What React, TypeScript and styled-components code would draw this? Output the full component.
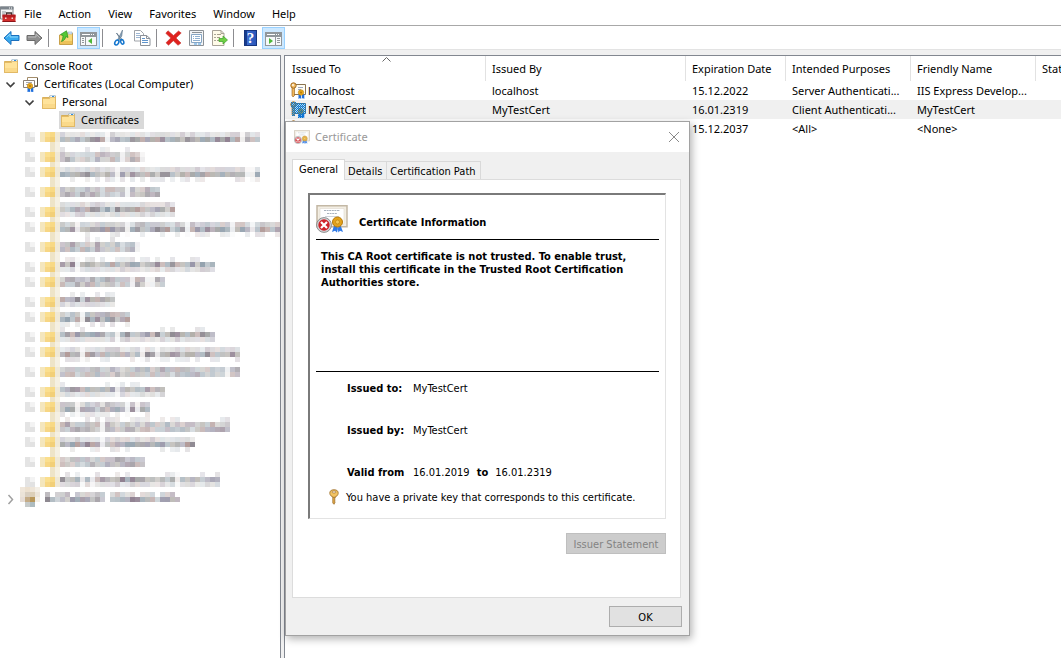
import React from "react";
import styled, { createGlobalStyle } from "styled-components";

const UI_FONT = '"Noto Sans", "Open Sans", sans-serif';
const DIALOG_FONT = '"DejaVu Sans Condensed", "Liberation Sans", sans-serif';

const GlobalStyle = createGlobalStyle`
  *, *::before, *::after { box-sizing: border-box; }
  body { margin: 0; background: #f0f0f0; color: #000; font: 11px/18px ${UI_FONT}; overflow: hidden; }
  button { font: inherit; color: inherit; border: 0; background: none; padding: 0; margin: 0; }
  svg { display: block; flex: none; }
`;

/* ---------- window frame ---------- */

const Window = styled.div`
  display: flex;
  flex-direction: column;
  min-height: 100vh;
`;

const MenuBar = styled.nav`
  display: flex;
  align-items: center;
  height: 26px;
  background: #fff;
  border-bottom: 1px solid #a8a8a8;
`;

const MenuItem = styled.button`
  height: 25px;
  padding: 2px 9px 0 8px;
  line-height: 22px;
`;

const MenuIcon = styled.span`
  width: 16px;
  padding-top: 2px;
`;

const ToolBar = styled.div`
  display: flex;
  align-items: center;
  height: 24px;
  padding-top: 1px;
  background: #fff;
  border-bottom: 1px solid #e3e3e3;
`;

const ToolButton = styled.button<{ $pressed?: boolean }>`
  display: flex;
  align-items: center;
  justify-content: center;
  width: 23px;
  height: 22px;
  background: ${(p) => (p.$pressed ? "#cce8ff" : "transparent")};
  border: 1px solid ${(p) => (p.$pressed ? "#99d1ff" : "transparent")};
`;

const ToolSeparator = styled.span`
  width: 1px;
  height: 18px;
  margin: 0 5px 0 2px;
  background: #8c8c90;
`;

const Workspace = styled.main`
  display: grid;
  grid-template-columns: 281px 1fr;
  column-gap: 3px;
  flex: 1;
  padding-top: 5px;
`;

const Pane = styled.section`
  min-width: 0;
  background: #fff;
  border-top: 1px solid #828790;
  overflow: hidden;
`;

const TreePane = styled(Pane)`
  border-right: 1px solid #828790;
`;

const ListPane = styled(Pane)`
  border-left: 1px solid #828790;
`;

/* ---------- tree ---------- */

const Tree = styled.ul`
  list-style: none;
  margin: 0;
  padding: 1px 0 0;
`;

const TreeRow = styled.li<{ $level: number }>`
  display: flex;
  align-items: center;
  height: 18px;
  padding-left: ${(p) => p.$level * 19 - 17}px;
`;

const Expander = styled.span`
  display: flex;
  align-items: center;
  width: 19px;
  height: 18px;
  padding-left: 3px;
`;

const TreeNode = styled.span<{ $selected?: boolean }>`
  display: flex;
  align-items: center;
  gap: 6px;
  height: 18px;
  padding: 0 5px 0 2px;
  background: ${(p) => (p.$selected ? "#d9d9d9" : "transparent")};
`;

const Redacted = styled.div`
  padding-top: 3px;
`;

/* ---------- list ---------- */

const CertTable = styled.table`
  width: 100%;
  min-width: 830px;
  table-layout: fixed;
  border-collapse: separate;
  border-spacing: 0;
`;

const HeadCell = styled.th`
  position: relative;
  height: 25px;
  padding: 0 6px;
  font-weight: 400;
  text-align: left;
  white-space: nowrap;
  overflow: hidden;
  border-right: 1px solid #e2e2e2;

  &:first-child { padding-left: 7px; }
`;

const SortArrow = styled.span`
  position: absolute;
  top: 1px;
  left: 97px;
`;

const BodyRow = styled.tr<{ $selected?: boolean }>`
  height: 19px;
  background: ${(p) => (p.$selected ? "#f0f0f0" : "#fff")};
`;

const Cell = styled.td`
  padding: 0 6px;
  white-space: nowrap;
  overflow: hidden;
`;

const NameCell = styled(Cell)`
  padding: 0 0 0 5px;
`;

const NameContent = styled.div`
  display: flex;
  align-items: center;
  gap: 2px;
`;

/* ---------- dialog ---------- */

const Dialog = styled.div`
  position: absolute;
  left: 285px;
  top: 121px;
  width: 405px;
  display: flex;
  flex-direction: column;
  background: #f0f0f0;
  border: 1px solid #a2a2a2;
  box-shadow: 2px 3px 8px rgba(0, 0, 0, 0.3);
  font: 11px/13px ${DIALOG_FONT};
`;

const TitleBar = styled.header`
  display: flex;
  align-items: center;
  gap: 5px;
  height: 30px;
  padding: 0 9px 0 8px;
  background: #fff;
  color: #999;
  font: 11px/18px ${UI_FONT};
`;

const Title = styled.h1`
  flex: 1;
  margin: 0;
  font-size: 11px;
  font-weight: 400;
`;

const Tabs = styled.div`
  display: flex;
  align-items: flex-end;
  height: 27px;
  padding: 0 6px;
`;

const Tab = styled.button<{ $active?: boolean }>`
  position: relative;
  height: ${(p) => (p.$active ? 21 : 18)}px;
  margin-bottom: ${(p) => (p.$active ? -1 : 0)}px;
  padding: ${(p) => (p.$active ? "0 6px 2px 6px" : "1px 4px 0 3px")};
  background: ${(p) => (p.$active ? "#fff" : "#f0f0f0")};
  border: 1px solid #d9d9d9;
  border-bottom: 0;
  border-left-width: ${(p) => (p.$active ? 1 : 0)}px;
  z-index: ${(p) => (p.$active ? 1 : 0)};
`;

const TabPanel = styled.div`
  display: flex;
  flex-direction: column;
  align-items: stretch;
  height: 419px;
  margin: 0 8px 0 6px;
  padding: 13px 14px 0 15px;
  background: #fff;
  border: 1px solid #dcdcdc;
`;

const InfoBox = styled.section`
  height: 326px;
  padding: 10px 6px 0;
  border: 1px solid #e3e3e3;
  border-top: 2px solid #7a7a7a;
  border-left: 2px solid #7a7a7a;
`;

const InfoHeader = styled.div`
  display: flex;
  align-items: flex-start;
  gap: 11px;
  height: 35px;
  border-bottom: 1px solid #000;
`;

const InfoTitle = styled.h2`
  margin: 0;
  padding-top: 11px;
  font-size: 11px;
  font-weight: 700;
`;

const Warning = styled.p`
  height: 132px;
  margin: 0;
  padding: 10px 5px 0;
  font-weight: 700;
  border-bottom: 1px solid #000;
`;

const Facts = styled.dl`
  display: grid;
  grid-template-columns: 66px 1fr;
  grid-auto-rows: 42px;
  margin: 0;
  padding: 10px 0 0 31px;

  dt { font-weight: 700; }
  dd { margin: 0; display: flex; gap: 7px; }
`;

const KeyNote = styled.p`
  display: flex;
  align-items: center;
  gap: 7px;
  margin: -19px 0 0;
  padding-left: 13px;
`;

const PushButton = styled.button<{ $width: number }>`
  width: ${(p) => p.$width}px;
  height: 21px;
  padding-top: 1px;
  background: #e1e1e1;
  border: 1px solid #adadad;

  &:disabled {
    color: #838383;
    background: #ccc;
    border-color: #bfbfbf;
  }
`;

const StatementRow = styled.div`
  display: flex;
  justify-content: flex-end;
  padding-top: 14px;
`;

const DialogFooter = styled.footer`
  display: flex;
  justify-content: flex-end;
  padding: 8px 7px;
`;

/* ---------- icons ---------- */

const FolderIcon = () => (
  <svg width="14" height="16" viewBox="0 0 14 16" aria-hidden="true">
    <path d="M.5 3.500H7l1-1.500h5.500v12.500H.5z" fill="#e9bd5c" stroke="#d3a648" strokeWidth=".8" />
    <rect x="8" y="1.500" width="5" height="3" fill="#f6faff" stroke="#a9c4dc" strokeWidth=".7" />
    <rect x="10" y="2" width="2" height="1" fill="#2f8be0" />
    <path d="M.5 4.500h7l1-1h5v11H.5z" fill="#ffe39a" stroke="#dcb25c" strokeWidth=".7" />
    <path d="M1 10h12v4H1z" fill="#fad98a" />
  </svg>
);

const Ribbon = ({ x, y }: { x: number; y: number }) => (
  <g transform={`translate(${x} ${y})`}>
    <path d="M-2.500 1.500v5l1.500-1 1 1V2z M.8 2v4.500l1-1 1.500 1V1.500z" fill="#1f6fdd" />
    <circle r="2.700" fill="#e8a91c" stroke="#c08312" strokeWidth=".6" />
    <circle r="1" fill="#b87a08" />
  </g>
);

const CertStoreIcon = () => (
  <svg width="15" height="16" viewBox="0 0 15 16" aria-hidden="true">
    <path d="M4.500 1.500h10v8h-10z" fill="#fff" stroke="#a38d6b" />
    <path d="M14.500 2v8.500h-3" fill="none" stroke="#5b5348" />
    <path d="M.5 4.500h11v7H.5z" fill="#fff" stroke="#8a8078" />
    <path d="M3 6.500h6M3 8.500h3" stroke="#a8a8b0" />
    <Ribbon x={7} y={10} />
  </svg>
);

const CertIcon = ({ selected }: { selected?: boolean }) => (
  <svg width="16" height="17" viewBox="0 0 16 17" aria-hidden="true">
    <path d="M3.500 2.500h12v10h-12z" fill="#fffdf4" stroke="#8a7350" />
    <path d="M8 5.500h5M8 7.500h3" stroke="#9aa6c0" />
    <path d="M2 5h2.500v8.500L3 15 2 13.500z" fill="#f0b65a" stroke="#8f5d1c" strokeWidth=".6" />
    <circle cx="3.500" cy="3.500" r="2.700" fill="#f3bd66" stroke="#a06a22" />
    <circle cx="3" cy="3" r=".9" fill="#fff" />
    <Ribbon x={11} y={10.5} />
    {selected && (
      <>
        <defs>
          <pattern id="selectionDither" width="2" height="2" patternUnits="userSpaceOnUse">
            <path d="M0 0h1v1H0zM1 1h1v1H1z" fill="#0078d7" />
          </pattern>
        </defs>
        <path d="M1 1h5v1h10v11h-2v4H8v-4H5v2H2V6H1z" fill="#0078d7" opacity=".25" />
        <path d="M1 1h5v1h10v11h-2v4H8v-4H5v2H2V6H1z" fill="url(#selectionDither)" shapeRendering="crispEdges" />
      </>
    )}
  </svg>
);

const BadCertIcon = ({ size }: { size: number }) => (
  <svg width={size} height={(size * 7) / 8} viewBox="0 0 32 28" opacity={size < 20 ? 0.8 : 1} aria-hidden="true">
    <path d="M1 .8h30v21H1z" fill="#f3eee3" stroke="#c3b8a5" strokeWidth="1.500" />
    <path d="M4 3.500h24v15.500H4z" fill="#fff" stroke="#ddd8ce" strokeWidth=".6" />
    <path d="M8 5.500h16M11 8.500h10" stroke="#a9b2bd" strokeDasharray="2 .6" />
    <path d="M9 11.500h14" stroke="#cfd4da" />
    <path d="M18.500 19l-2.500 8 3-1.200 2 1.800 1.500-6zM24 19l3 8-3-1.200-1.600 1.800L21.500 21z" fill="#2e79e6" />
    <circle cx="21.500" cy="17" r="5" fill="#e3a21b" stroke="#b87a08" />
    <circle cx="21.500" cy="17" r="2" fill="#f5c851" stroke="#b57a0a" strokeWidth=".6" />
    <circle cx="8" cy="20" r="7.400" fill="#d5d7da" stroke="#777" strokeWidth=".8" />
    <circle cx="8" cy="20" r="5.700" fill="#cf2228" />
    <path d="M5 17l6 6M11 17l-6 6" stroke="#fff" strokeWidth="2.200" />
  </svg>
);

const ConsoleIcon = () => (
  <svg width="16" height="18" viewBox="0 0 16 18" aria-hidden="true">
    <path d="M.5 2h12.500v12H.5z" fill="#f4f5f6" stroke="#868b91" />
    <path d="M0 1.500h13.500v3H0z" fill="#7c848c" />
    <path d="M9 3h1M11 3h1" stroke="#fff" />
    <path d="M2 7h4M2 9h3" stroke="#8f959b" />
    <path d="M6.500 10V8h5v2" fill="none" stroke="#3d3030" strokeWidth="1.300" />
    <path d="M2.500 10h13v7h-13z" fill="#d32f2d" />
    <path d="M2.500 9.500h13v3h-13z" fill="#b31c20" />
    <path d="M5 12.500h1.500V14H5zM11.500 12.500H13V14h-1.500z" fill="#f5d9d6" />
    <path d="M2.500 16h13v1h-13z" fill="#8c1519" />
  </svg>
);

const ArrowIcon = ({ forward }: { forward?: boolean }) => (
  <svg width="17" height="16" viewBox="0 0 17 16" aria-hidden="true">
    <path
      d={forward ? "M16 8L9 1.500v4H1v5h8v4z" : "M1 8l7-6.500v4h8v5H8v4z"}
      fill={forward ? "#8f8f8f" : "#38a9ee"}
      stroke={forward ? "#6a6a6a" : "#1b6fbd"}
      strokeLinejoin="round"
    />
    <path d={forward ? "M2 7h8V4l4 4" : "M15 7H7V4L3.500 7.500"} fill="none" stroke={forward ? "#bdbdbd" : "#8bd6fb"} />
  </svg>
);

const FolderUpIcon = () => (
  <svg width="16" height="16" viewBox="0 0 16 16" aria-hidden="true">
    <path d="M1.500 5h5l1.500-2h6.500v11.500h-13z" fill="#f8d878" stroke="#c9a14a" />
    <path d="M10 2h4v2h-4z" fill="#dceaf8" stroke="#8fb0d0" strokeWidth=".6" />
    <path d="M2 11h12v3H2z" fill="#edc25a" />
    <path d="M3.500 11.500C6.500 10.500 7.500 8.500 7.700 6.500L10 7.500 8.500.8 2.500 4.500l2.500 1c0 2-.5 3.500-1.500 6z" fill="#55c936" stroke="#259020" strokeWidth=".7" />
  </svg>
);

const PaneIcon = ({ mirrored }: { mirrored?: boolean }) => (
  <svg width="17" height="16" viewBox="0 -2 17 16" shapeRendering="crispEdges" aria-hidden="true">
    <path d="M.5.500h16v13H.5z" fill="#f7f9fa" stroke="#92979b" />
    <path d="M1 1h15v3H1z" fill="#8f969b" />
    <path d="M2 2h8v1H2zM11 2h1v1h-1zM13 2h1v1h-1z" fill="#fff" />
    {mirrored ? (
      <>
        <path d="M10.500 5v8M1 4.500h15" stroke="#92979b" />
        <path d="M12 6h3v1h-3zM12 8h3v1h-3zM12 10h3v1h-3z" fill="#92979b" />
        <path d="M4 6l4 3-4 3z" fill="#4cb838" shapeRendering="auto" />
      </>
    ) : (
      <>
        <path d="M5.500 5v8M1 4.500h15" stroke="#92979b" />
        <path d="M2 6h2v1H2zM2 8h2v1H2zM2 10h2v1H2z" fill="#92979b" />
        <path d="M12 6l-4 3 4 3z" fill="#4cb838" shapeRendering="auto" />
      </>
    )}
  </svg>
);

const CutIcon = () => (
  <svg width="15" height="16" viewBox="0 0 15 16" aria-hidden="true">
    <path d="M10.500 0L9.800 6 6.500 11 5.500 10z" fill="#8ba5bc" stroke="#4d6478" strokeWidth=".5" />
    <path d="M4.500 3l5 8 1-1z" fill="#dbe7f0" stroke="#4d6478" strokeWidth=".7" />
    <ellipse cx="4.800" cy="12.500" rx="1.800" ry="2.600" fill="none" stroke="#1677cf" strokeWidth="1.600" transform="rotate(30 4.800 12.500)" />
    <ellipse cx="10.200" cy="11.800" rx="1.500" ry="2.400" fill="none" stroke="#1677cf" strokeWidth="1.500" transform="rotate(-20 10.200 11.800)" />
  </svg>
);

const CopyIcon = () => (
  <svg width="17" height="16" viewBox="0 0 17 16" aria-hidden="true">
    <path d="M.5.5h6l3 3V11H.5z" fill="#fff" stroke="#9fa3a9" />
    <path d="M2 3.500h4M2 5.500h5M2 7.500h5" stroke="#9db6d3" />
    <path d="M6.500 5.500h6l3.500 3V15.500H6.500z" fill="#fff" stroke="#8c9198" />
    <path d="M12.500 5.500v3H16" fill="none" stroke="#8c9198" />
    <path d="M8 8.500h3M8 10.500h6M8 12.500h6" stroke="#5f94cc" />
  </svg>
);

const DeleteIcon = () => (
  <svg width="17" height="16" viewBox="0 0 17 16" aria-hidden="true">
    <path d="M3 .8L8.500 5.500 13.500 1l2.700 2L11 8l5 5-3 2.300L8.300 10.700 3.500 15.200 1 12.800 5.800 8 .8 3.300z" fill="#e0221f" stroke="#c43a36" strokeWidth=".6" />
  </svg>
);

const PropertiesIcon = () => (
  <svg width="16" height="16" viewBox="0 0 16 16" aria-hidden="true">
    <path d="M.5.500h14v15H.5z" fill="#f2f4f6" stroke="#8c9196" />
    <path d="M3 2.500h10" stroke="#8a9096" />
    <path d="M2.500 4.500h10v8h-10z" fill="#fff" stroke="#87a6c4" />
    <path d="M4 6.500h1M4 8.500h1M6 6.500h5M6 8.500h5M4 10.500h7" stroke="#8fb0d0" />
    <path d="M5 14h3M9 14h3" stroke="#4a9be0" />
  </svg>
);

const ExportIcon = () => (
  <svg width="16" height="16" viewBox="0 0 16 16" aria-hidden="true">
    <path d="M.5.500h8.500l3 3V15.500H.5z" fill="#fffbe8" stroke="#a8a297" />
    <path d="M9 .500v3h3" fill="none" stroke="#a8a297" />
    <path d="M2.500 4.500h1M2.500 7.500h1M2.500 10.500h1" stroke="#55524b" />
    <path d="M5 4.500h4M5 7.500h3M5 10.500h3" stroke="#a59d88" />
    <path d="M7 8.500h4V6l4.500 4-4.500 4v-2.500H7z" fill="#6fd044" stroke="#3b9f2a" strokeWidth=".7" />
  </svg>
);

const HelpGlyph = styled.span`
  display: block;
  width: 13px;
  height: 16px;
  background: linear-gradient(90deg, #173c8e 2px, #3f6fd0 2px, #2a55b8);
  border: 1px solid #16357e;
  color: #fff;
  font: 700 15px/14px "Liberation Serif", serif;
  text-align: center;
`;

const KeyIcon = () => (
  <svg width="10" height="16" viewBox="0 0 10 16" aria-hidden="true">
    <path d="M3.800 7h2.400v2l-.8 1 .8 1-.8 1 .8 1-1.200 2.300L3.800 14z" fill="#e7b04b" stroke="#8f5f1b" strokeWidth=".7" />
    <path d="M5 .700C8 .700 9.500 2.300 9.200 4.500 9 6.500 7.500 7.500 5 8.500 2.500 7.500 1 6.500.8 4.500.5 2.300 2 .700 5 .700z" fill="#f2c362" stroke="#9c6c26" strokeWidth=".8" />
    <ellipse cx="5" cy="3" rx="2" ry="1" fill="#fff" stroke="#9c6c26" strokeWidth=".7" />
  </svg>
);

const Chevron = ({ open }: { open?: boolean }) => (
  <svg width="10" height="10" viewBox="0 0 10 10" aria-hidden="true">
    <path d={open ? "M1.500 3.500l4 4 4-4" : "M3 1l4 4-4 4"} fill="none" stroke={open ? "#404040" : "#a6a6a6"} strokeWidth="1.600" />
  </svg>
);

/* ---------- mosaic over the hidden tree entries ---------- */

/* Top of the row, right edge of its label, and the strength of each 5px band from the top. */
const HIDDEN_ROWS: [number, number, number[]][] = [
  [132, 260, [2, 5]],
  [147, 145, [1, 3, 4]],
  [167, 260, [2, 5, 1]],
  [187, 160, [4, 4]],
  [202, 175, [2, 5, 2]],
  [222, 280, [3, 5, 1]],
  [237, 140, [1, 4, 4]],
  [257, 215, [1, 5, 2]],
  [277, 165, [4, 4]],
  [292, 115, [1, 5, 2]],
  [312, 130, [4, 5, 1]],
  [327, 215, [1, 5, 2]],
  [347, 240, [2, 5, 1]],
  [367, 240, [4, 4]],
  [382, 165, [1, 5, 2]],
  [402, 150, [3, 5, 1]],
  [417, 230, [1, 4, 4]],
  [437, 195, [2, 5, 1]],
  [457, 145, [4, 4]],
  [472, 220, [1, 5, 2]],
];

const TINTS = ["#8f8090", "#a5a7a7", "#94a2ae", "#b19a98", "#9896a8", "#b3b0ab", "#8d8890", "#a8b4bc"];
const OPACITY = [0, 0.25, 0.42, 0.6, 0.75, 1];

const noise = (a: number, b: number) => {
  const n = Math.sin(a * 12.9898 + b * 78.233) * 43758.5453;
  return n - Math.floor(n);
};

const ROOT_ICON_CELLS: [number, number, string][] = [
  [20, 487, "#efe6da"], [25, 487, "#ece0cf"], [30, 487, "#eee5d8"], [35, 487, "#f4efe6"],
  [20, 492, "#ebe3d8"], [25, 492, "#d8cec0"], [30, 492, "#dccfb8"], [35, 492, "#ece5da"],
  [20, 497, "#e6ddd6"], [25, 497, "#c4ab86"], [30, 497, "#b8975a"], [35, 497, "#f4efe6"],
  [25, 502, "#c7cbca"], [30, 502, "#aebcc0"],
];

const Mosaic = () => {
  const cells: React.ReactElement[] = [];
  const cell = (x: number, y: number, fill: string, opacity = 1) =>
    cells.push(<rect key={cells.length} x={x} y={y} width="5" height="5" fill={fill} opacity={opacity} />);

  for (let y = 132; y < 487; y += 5) {
    cell(50, y, "#eee4c8");
    cell(55, y, "#f5f0e2");
  }
  HIDDEN_ROWS.forEach(([top, right, bands]) => {
    const low = bands.length === 3 && bands[0] < 3 && (bands[0] === 1 || bands[2] > 1);
    [0, 1].forEach((i) => {
      const y = top + 5 * (low ? i + 1 : i);
      cell(25, y, "#e4e4e4");
      cell(30, y, i ? "#e2e2e2" : "#f3f3f3");
      cell(40, y, "#f4e6bd");
      cell(45, y, i ? "#f7d683" : "#fbdf8e");
      cell(50, y, i ? "#f2cf78" : "#f8d984");
      cell(55, y, "#efe8d5");
    });
    bands.forEach((band, i) => {
      for (let x = 60; x < right; x += 5) {
        const n = noise(x, top + i * 5);
        const gap = x > 70 && noise(x + 3, top) < 0.07;
        if (band === 1 && n < 0.6) continue;
        const tint = TINTS[Math.floor(noise(top + i, x) * TINTS.length)];
        cell(x, top + i * 5, tint, OPACITY[band] * (gap ? 0.2 : 0.6 + n * 0.4));
      }
    });
  });
  ROOT_ICON_CELLS.forEach(([x, y, fill]) => cell(x, y, fill));
  [3, 5].forEach((band, i) => {
    for (let x = 45; x < 180; x += 5) {
      const n = noise(x, i + 9);
      if (x === 105 || (i === 0 && n < 0.2)) continue;
      cell(x, 492 + i * 5, TINTS[Math.floor(noise(x, i) * 8)], OPACITY[band] * (0.5 + n * 0.5));
    }
  });
  return (
    <svg width="280" height="378" viewBox="0 132 280 378" shapeRendering="crispEdges" role="img" aria-label="Hidden entries">
      {cells}
      <path d="M8.500 495l4 4.500-4 4.500" fill="none" stroke="#a0a0a0" strokeWidth="1.500" shapeRendering="auto" />
    </svg>
  );
};

/* ---------- data ---------- */

const MENU = ["File", "Action", "View", "Favorites", "Window", "Help"];

const CERTS = [
  ["localhost", "localhost", "15.12.2022", "Server Authenticati...", "IIS Express Develop..."],
  ["MyTestCert", "MyTestCert", "16.01.2319", "Client Authenticati...", "MyTestCert"],
  ["", "", "15.12.2037", "<All>", "<None>"],
];

export default function App() {
  return (
    <Window>
      <GlobalStyle />
      <MenuBar>
        <MenuIcon><ConsoleIcon /></MenuIcon>
        {MENU.map((m) => <MenuItem key={m}>{m}</MenuItem>)}
      </MenuBar>
      <ToolBar>
        <ToolButton aria-label="Back"><ArrowIcon /></ToolButton>
        <ToolButton aria-label="Forward"><ArrowIcon forward /></ToolButton>
        <ToolSeparator />
        <ToolButton aria-label="Up one level"><FolderUpIcon /></ToolButton>
        <ToolButton $pressed aria-label="Show console tree"><PaneIcon /></ToolButton>
        <ToolSeparator />
        <ToolButton aria-label="Cut"><CutIcon /></ToolButton>
        <ToolButton aria-label="Copy"><CopyIcon /></ToolButton>
        <ToolSeparator />
        <ToolButton aria-label="Delete"><DeleteIcon /></ToolButton>
        <ToolButton aria-label="Properties"><PropertiesIcon /></ToolButton>
        <ToolButton aria-label="Export list"><ExportIcon /></ToolButton>
        <ToolSeparator />
        <ToolButton aria-label="Help"><HelpGlyph>?</HelpGlyph></ToolButton>
        <ToolButton $pressed aria-label="Show action pane"><PaneIcon mirrored /></ToolButton>
      </ToolBar>
      <Workspace>
        <TreePane>
          <Tree>
            <TreeRow $level={1}>
              <TreeNode><FolderIcon />Console Root</TreeNode>
            </TreeRow>
            <TreeRow $level={1}>
              <Expander><Chevron open /></Expander>
              <TreeNode><CertStoreIcon />Certificates (Local Computer)</TreeNode>
            </TreeRow>
            <TreeRow $level={2}>
              <Expander><Chevron open /></Expander>
              <TreeNode><FolderIcon />Personal</TreeNode>
            </TreeRow>
            <TreeRow $level={4}>
              <TreeNode $selected><FolderIcon />Certificates</TreeNode>
            </TreeRow>
          </Tree>
          <Redacted><Mosaic /></Redacted>
        </TreePane>
        <ListPane>
          <CertTable>
            <colgroup>
              <col width="201" /><col width="200" /><col width="100" /><col width="125" /><col width="125" /><col />
            </colgroup>
            <thead>
              <tr>
                <HeadCell>
                  Issued To
                  <SortArrow>
                    <svg width="9" height="5" viewBox="0 0 9 5" aria-hidden="true">
                      <path d="M.5 4.500l4-4 4 4" fill="none" stroke="#666" />
                    </svg>
                  </SortArrow>
                </HeadCell>
                <HeadCell>Issued By</HeadCell>
                <HeadCell>Expiration Date</HeadCell>
                <HeadCell>Intended Purposes</HeadCell>
                <HeadCell>Friendly Name</HeadCell>
                <HeadCell>Status</HeadCell>
              </tr>
            </thead>
            <tbody>
              {CERTS.map(([to, ...rest], i) => (
                <BodyRow key={i} $selected={i === 1}>
                  <NameCell><NameContent><CertIcon selected={i === 1} />{to}</NameContent></NameCell>
                  {rest.map((text, j) => <Cell key={j}>{text}</Cell>)}
                  <Cell />
                </BodyRow>
              ))}
            </tbody>
          </CertTable>
        </ListPane>
      </Workspace>
      <Dialog role="dialog" aria-label="Certificate">
        <TitleBar>
          <BadCertIcon size={16} />
          <Title>Certificate</Title>
          <button aria-label="Close">
            <svg width="12" height="12" viewBox="0 0 12 12" aria-hidden="true">
              <path d="M1 1l10 10M11 1L1 11" stroke="#8a8a8a" />
            </svg>
          </button>
        </TitleBar>
        <Tabs role="tablist">
          <Tab $active role="tab">General</Tab>
          <Tab role="tab">Details</Tab>
          <Tab role="tab">Certification Path</Tab>
        </Tabs>
        <TabPanel role="tabpanel">
          <InfoBox>
            <InfoHeader>
              <BadCertIcon size={32} />
              <InfoTitle>Certificate Information</InfoTitle>
            </InfoHeader>
            <Warning>
              This CA Root certificate is not trusted. To enable trust,
              <br />install this certificate in the Trusted Root Certification
              <br />Authorities store.
            </Warning>
            <Facts>
              <dt>Issued to:</dt><dd>MyTestCert</dd>
              <dt>Issued by:</dt><dd>MyTestCert</dd>
              <dt>Valid from</dt><dd>16.01.2019 <b>to</b> 16.01.2319</dd>
            </Facts>
            <KeyNote><KeyIcon />You have a private key that corresponds to this certificate.</KeyNote>
          </InfoBox>
          <StatementRow><PushButton $width={100} disabled>Issuer Statement</PushButton></StatementRow>
        </TabPanel>
        <DialogFooter><PushButton $width={73}>OK</PushButton></DialogFooter>
      </Dialog>
    </Window>
  );
}
